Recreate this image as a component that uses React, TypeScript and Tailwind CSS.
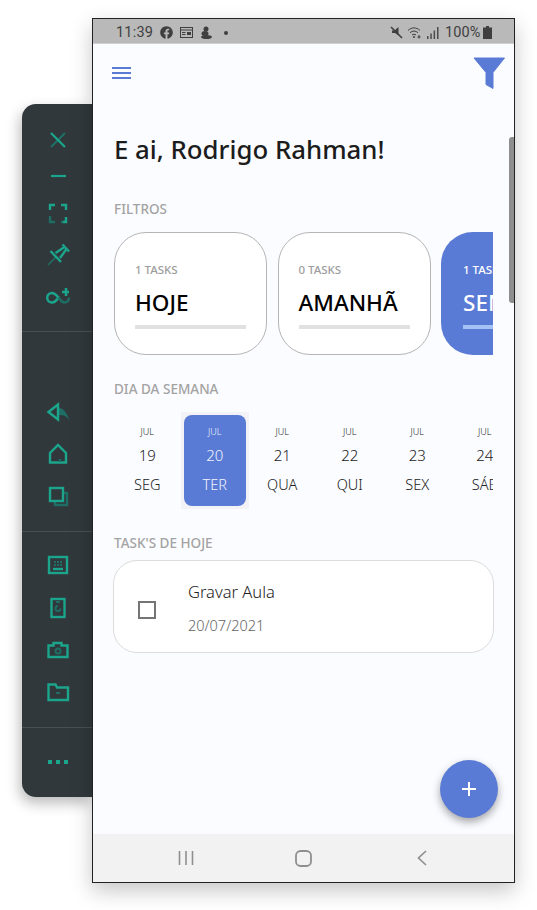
import { FaFacebook } from "react-icons/fa";

const TEAL = "#1ba58c";
const DIM = "#1f6e66";

const filters = [
	{ count: "1 TASKS", name: "HOJE" },
	{ count: "0 TASKS", name: "AMANHÃ" },
	{ count: "1 TASKS", name: "SEMANA", active: true },
];

const days = [
	{ n: "19", d: "SEG" },
	{ n: "20", d: "TER", active: true },
	{ n: "21", d: "QUA" },
	{ n: "22", d: "QUI" },
	{ n: "23", d: "SEX" },
	{ n: "24", d: "SÁB" },
];

function Toolbar() {
	return (
		<div className="w-[70px] h-[693px] mt-[104px] shrink-0 bg-[#31383b] rounded-l-[14px] flex flex-col shadow-[-2px_6px_14px_rgba(0,0,0,0.28)]">
			<div className="h-[228px] pt-[23px] pl-[2px] flex flex-col items-center border-b border-[#4a4f52]">
				<svg width="24" height="24" viewBox="0 0 24 24" fill="none" strokeWidth="2.2">
					<path d="M19 6 5 20" stroke={DIM} />
					<path d="M5 6 19 20" stroke={TEAL} />
				</svg>
				<svg className="mt-[13px]" width="24" height="24" viewBox="0 0 24 24" fill="none" strokeWidth="2.2">
					<path d="M5 12h15" stroke={TEAL} />
				</svg>
				<svg className="mt-[13px]" width="24" height="24" viewBox="0 0 24 24" fill="none" strokeWidth="2.4">
					<path d="M4 9V4h5M15 4h5v5" stroke={TEAL} />
					<path d="M4 15v6h5M15 21h2" stroke={DIM} />
					<path d="M20 16v5h-3" stroke={TEAL} />
				</svg>
				<svg className="mt-[18px]" width="24" height="24" viewBox="0 0 24 24" fill="none" strokeWidth="2.4">
					<path d="M10 14 2 22" stroke={DIM} strokeWidth="1.6" />
					<path d="M16.500 1.500l6.500 7" stroke={TEAL} />
					<path d="M4.500 8l10.500 11" stroke={TEAL} />
					<path d="M9.500 10 18.500 4M14 15 20.500 6" stroke={TEAL} />
				</svg>
				<svg className="mt-[17px]" width="24" height="24" viewBox="0 0 24 24" fill="none" strokeWidth="2.5">
					<path d="M12.500 13.500c-2 3-3.500 5-6.500 5a4.800 4.800 0 0 1 0-9.600c3 0 5 3.100 6.500 4.600z" stroke={TEAL} />
					<path d="M12.500 13.500c1.500 2 3 5 6 5a4.500 4.500 0 0 0 4.500-5" stroke={DIM} />
					<path d="M20 4v8M16 8h7" stroke={TEAL} />
				</svg>
			</div>
			<div className="h-[200px] pt-[68px] pl-[2px] flex flex-col items-center border-b border-[#4a4f52]">
				<svg width="24" height="24" viewBox="0 0 24 24" fill="none" strokeWidth="2.4">
					<path d="M13 8c5 0 8 6 10.500 12-3-4-6-5-10.500-5z" fill={DIM} />
					<path d="M2.500 12 12 4.500v15z" stroke={TEAL} />
				</svg>
				<svg className="mt-[18px]" width="24" height="24" viewBox="0 0 24 24" fill="none" strokeWidth="2.4">
					<path d="M4 20.500V11l8-8 8 8v9.500z" stroke={TEAL} />
					<path d="M14 17v3" stroke={DIM} />
				</svg>
				<svg className="mt-[18px]" width="24" height="24" viewBox="0 0 24 24" fill="none" strokeWidth="2.4">
					<path d="M17 9h4v12H9v-4" stroke={DIM} />
					<rect x="4" y="4" width="13" height="13" stroke={TEAL} />
				</svg>
			</div>
			<div className="h-[196px] pt-[21px] pl-[2px] flex flex-col items-center border-b border-[#4a4f52]">
				<svg width="24" height="24" viewBox="0 0 24 24" fill="none" strokeWidth="2.4">
					<rect x="3" y="4" width="18" height="16" stroke={TEAL} />
					<path d="M8 9h2M11 9h2M14 9h2M8 12h2M11 12h2M14 12h2" stroke={DIM} strokeWidth="2" />
					<path d="M7 16h10" stroke={TEAL} />
				</svg>
				<svg className="mt-[18px]" width="24" height="24" viewBox="0 0 24 24" fill="none" strokeWidth="2.4">
					<rect x="5.500" y="4" width="13" height="18" stroke={TEAL} />
					<path d="M14.500 13.500a2.500 2.500 0 1 1-2.500-2.500M10 7h4" stroke={DIM} strokeWidth="2" />
				</svg>
				<svg className="mt-[19px]" width="24" height="24" viewBox="0 0 24 24" fill="none" strokeWidth="2.4">
					<path d="M2.500 19V7.500h5V5h8v2.500h6V19z" stroke={TEAL} />
					<circle cx="12" cy="13" r="2.500" stroke={DIM} strokeWidth="2" />
				</svg>
				<svg className="mt-[18px]" width="24" height="24" viewBox="0 0 24 24" fill="none" strokeWidth="2.4">
					<path d="M2.500 20V4.500h7l1.500 3h11V20z" stroke={TEAL} />
					<path d="M10 13h4" stroke={DIM} strokeWidth="2" />
				</svg>
			</div>
			<div className="pt-[32px] pl-[2px] flex justify-center gap-[4px]">
				<div className="w-[4px] h-[4px] bg-[#1ba58c]" />
				<div className="w-[4px] h-[4px] bg-[#1ba58c]" />
				<div className="w-[4px] h-[4px] bg-[#1ba58c]" />
			</div>
		</div>
	);
}

function StatusBar() {
	return (
		<div className="h-[25px] shrink-0 bg-[#b9b9b9] border-b border-[#cfcfcf] flex items-center pl-[23px] pt-[3px] text-[#3f3f3f] font-['Roboto',sans-serif]">
			<span className="text-[14.5px] w-[37px] tracking-[0.2px]">11:39</span>
			<FaFacebook className="ml-[7px]" size={13} />
			<svg className="ml-[7px]" width="13" height="11" viewBox="0 0 13 11" fill="none" stroke="#3f3f3f">
				<rect x="0.500" y="0.500" width="12" height="10" />
				<path d="M1 3h11" />
				<rect x="7" y="5" width="4" height="3" fill="#3f3f3f" stroke="none" />
				<path d="M2 5.500h3.500M2 7.500h3.500" />
			</svg>
			<svg className="ml-[7px]" width="12" height="13" viewBox="0 0 12 13" fill="#3f3f3f">
				<circle cx="6" cy="3" r="2.500" />
				<ellipse cx="5" cy="7.500" rx="3.500" ry="2.500" />
				<ellipse cx="6.500" cy="11" rx="5.500" ry="2" />
			</svg>
			<div className="ml-[12px] w-[4px] h-[4px] rounded-full bg-[#3f3f3f]" />
			<svg className="ml-[162px]" width="13" height="13" viewBox="0 0 13 13" fill="#3f3f3f">
				<path d="M2 4.500h2.500L8.500 1v8.500L5 7H2z" />
				<path d="M1 1l11 11" stroke="#3f3f3f" strokeWidth="1.600" />
			</svg>
			<svg className="ml-[4px]" width="15" height="12" viewBox="0 0 15 12" fill="none" stroke="#3f3f3f">
				<path d="M1 3.500C4.500 0 9.500 0 13 3.500M3 5.800c2.500-2.300 5.500-2.300 8 0M5 8c1.300-1 2.700-1 4 0" />
				<circle cx="7" cy="10" r="1" fill="#3f3f3f" stroke="none" />
				<path d="M12 8v3.500M10.500 10h3" />
			</svg>
			<svg className="ml-[5px]" width="12" height="12" viewBox="0 0 12 12" fill="#4c4c4c">
				<rect x="0" y="9" width="1.500" height="3" />
				<rect x="3.300" y="6.500" width="1.500" height="5.500" />
				<rect x="6.600" y="3.500" width="1.500" height="8.500" />
				<rect x="10" y="0" width="1.500" height="12" />
			</svg>
			<span className="ml-[6px] text-[14.5px] tracking-[0.1px]">100%</span>
			<svg className="ml-[3px]" width="9" height="13" viewBox="0 0 9 13" fill="#3f3f3f">
				<path d="M3 0h3v1.500h3V13H0V1.500h3z" />
			</svg>
		</div>
	);
}

function FilterCard({ count, name, active }: { count: string; name: string; active?: boolean }) {
	return (
		<div
			className={`w-[153px] h-[123px] shrink-0 rounded-[32px] ${
				active ? "bg-[#5a7bd5] pl-[22px] pt-[31px]" : "bg-white border border-[#b5b5b5] pl-[20px] pt-[30px]"
			}`}
		>
			<div className={`text-[11.5px] leading-[14px] font-medium ${active ? "text-white" : "text-[#9d9d9d]"}`}>{count}</div>
			<div className={`mt-[11px] text-[22.5px] leading-[30px] font-medium whitespace-nowrap ${active ? "text-white" : "text-black"}`}>
				{name}
			</div>
			<div className={`mt-[7px] w-[111px] h-[4px] ${active ? "bg-[#a4c0f4]" : "bg-[#e1e1e1]"}`} />
		</div>
	);
}

function DayItem({ n, d, active }: { n: string; d: string; active?: boolean }) {
	return (
		<div className={`w-[67.5px] h-[97px] shrink-0 p-[3px] ${active ? "bg-[#f2f2f7]" : ""}`}>
			<div
				className={`h-[91px] rounded-[8px] flex flex-col items-center pt-[10px] whitespace-nowrap font-light ${
					active ? "bg-[#5a7bd5] text-[#f2f4fc]" : "text-[#222]"
				}`}
			>
				<div className="text-[9px] leading-[14px]">JUL</div>
				<div className="mt-[6px] text-[15px] leading-[20px]">{n}</div>
				<div className="mt-[9px] text-[14.5px] leading-[20px]">{d}</div>
			</div>
		</div>
	);
}

export default function App() {
	return (
		<div className="w-[537px] h-[910px] bg-white overflow-hidden flex pl-[22px] font-['Noto_Sans',sans-serif]">
			<Toolbar />
			<div className="relative w-[423px] h-[865px] mt-[18px] shrink-0 border border-[#222] flex flex-col bg-[#fbfcff] shadow-[0_8px_20px_rgba(0,0,0,0.22)]">
				<StatusBar />
				<div className="flex-1 overflow-hidden">
					<div className="h-[32px] mt-[13px] pl-[19px] pr-[9px] flex items-center justify-between">
						<div className="w-[19px] flex flex-col gap-[3px]">
							<div className="h-[2px] bg-[#5a7bd5]" />
							<div className="h-[2px] bg-[#5a7bd5]" />
							<div className="h-[2px] bg-[#5a7bd5]" />
						</div>
						<svg width="32" height="32" viewBox="0 0 32 32" fill="#5a7bd5">
							<path d="M1 1h30.500L20 15.500V31.500L13 27.500V15.500z" strokeLinejoin="round" stroke="#5a7bd5" />
						</svg>
					</div>
					<div className="mt-[42px] pl-[21px] text-[25.8px] leading-[36px] font-medium text-[#1c1c1c]">E ai, Rodrigo Rahman!</div>
					<div className="mt-[34px] pl-[21px] text-[13.5px] leading-[16px] font-medium text-[#a3a3a3]">FILTROS</div>
					<div className="mt-[15px] mx-[21px] flex gap-[10.5px] overflow-hidden">
						{filters.map((f) => (
							<FilterCard key={f.name} {...f} />
						))}
					</div>
					<div className="mt-[26px] pl-[21px] text-[13.5px] leading-[16px] font-medium text-[#a3a3a3]">DIA DA SEMANA</div>
					<div className="mt-[15px] ml-[20.5px] mr-[21px] flex overflow-hidden">
						{days.map((d) => (
							<DayItem key={d.n} {...d} />
						))}
					</div>
					<div className="mt-[26px] pl-[21px] text-[13.5px] leading-[16px] font-medium text-[#a3a3a3]">TASK'S DE HOJE</div>
					<div className="mt-[9px] ml-[20px] w-[381px] h-[93px] bg-white border border-[#dcdcdc] rounded-[24px] flex items-center">
						<div className="ml-[24px] w-[18px] h-[18px] mt-[7px] border-2 border-[#757575]" />
						<div className="ml-[32px] pt-[2px]">
							<div className="text-[16.5px] leading-[22px] font-light text-[#222]">Gravar Aula</div>
							<div className="mt-[12px] text-[14.5px] leading-[20px] font-light text-[#666]">20/07/2021</div>
						</div>
					</div>
				</div>
				<div className="h-[48px] shrink-0 bg-[#f2f2f2] flex justify-center items-center">
					<div className="w-[118px] flex justify-center">
						<svg width="16" height="16" viewBox="0 0 16 16" fill="none" stroke="#8f8f8f" strokeWidth="1.600">
							<path d="M1.500 1v14M8 1v14M14.500 1v14" />
						</svg>
					</div>
					<div className="w-[118px] flex justify-center">
						<svg width="17" height="17" viewBox="0 0 17 17" fill="none" stroke="#8f8f8f" strokeWidth="1.800">
							<rect x="1" y="1" width="15" height="15" rx="4.500" />
						</svg>
					</div>
					<div className="w-[118px] flex justify-center">
						<svg width="10" height="16" viewBox="0 0 10 16" fill="none" stroke="#8f8f8f" strokeWidth="1.700">
							<path d="M9 1 1.500 8 9 15" />
						</svg>
					</div>
				</div>
				<div className="absolute right-[0px] top-[118px] w-[5px] h-[166px] bg-[#8e8e8e] rounded-l-[3px]" />
				<div className="absolute right-[16px] bottom-[64px] w-[58px] h-[58px] rounded-full bg-[#5a7bd5] flex items-center justify-center shadow-[0_4px_8px_rgba(0,0,0,0.35)]">
					<svg width="14" height="14" viewBox="0 0 14 14" stroke="#fff" strokeWidth="2">
						<path d="M7 0v14M0 7h14" />
					</svg>
				</div>
			</div>
		</div>
	);
}
